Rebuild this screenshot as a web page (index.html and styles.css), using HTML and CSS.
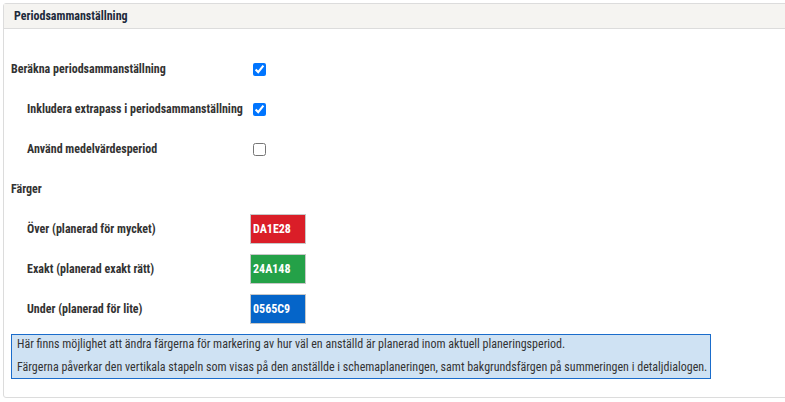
FILE: index.html
```html
<!DOCTYPE html>
<html lang="sv">

<head>
    <meta charset="UTF-8">
    <meta name="viewport"
        content="width=device-width, initial-scale=1.0">
    <title>Periodsammanställning</title>
    <link rel="stylesheet" href="styles.css">
</head>

<body>
    <section class="panel">
        <div class="panel-header">Periodsammanställning</div>
        <div class="panel-body">
            <div class="settings">
                <label class="setting-label" for="berakna">Beräkna periodsammanställning</label>
                <div class="setting-control"><input type="checkbox" id="berakna" checked></div>

                <label class="setting-label sub" for="extrapass">Inkludera extrapass i periodsammanställning</label>
                <div class="setting-control"><input type="checkbox" id="extrapass" checked></div>

                <label class="setting-label sub" for="medel">Använd medelvärdesperiod</label>
                <div class="setting-control"><input type="checkbox" id="medel"></div>

                <div class="setting-label">Färger</div>
                <div class="setting-control"></div>

                <label class="setting-label sub" for="over">Över (planerad för mycket)</label>
                <div class="setting-control"><input class="color-input over" id="over" value="DA1E28"></div>

                <label class="setting-label sub" for="exakt">Exakt (planerad exakt rätt)</label>
                <div class="setting-control"><input class="color-input exakt" id="exakt" value="24A148"></div>

                <label class="setting-label sub" for="under">Under (planerad för lite)</label>
                <div class="setting-control"><input class="color-input under" id="under" value="0565C9"></div>
            </div>
            <div class="info-box">
                <p>Här finns möjlighet att ändra färgerna för markering av hur väl en anställd är planerad inom aktuell planeringsperiod.</p>
                <p>Färgerna påverkar den vertikala stapeln som visas på den anställde i schemaplaneringen, samt bakgrundsfärgen på summeringen i detaljdialogen.</p>
            </div>
        </div>
    </section>
</body>

</html>
```

FILE: styles.css
```css
body {
    font-family: Roboto, "DejaVu Sans Condensed", sans-serif;
    font-stretch: 75%;
    font-size: 12px;
    color: #333;
    background-color: #fff;
    margin: 0;
    padding: 0;
    overflow: hidden;
}

.panel {
    margin: 3px -10px 0 3px;
    border: 1px solid #dcdcdc;
    border-radius: 3px;
    background-color: #fff;
}

.panel-header {
    background-color: #f5f4f1;
    border-bottom: 1px solid #dcdcdc;
    height: 24px;
    line-height: 24px;
    padding-left: 10px;
    font-weight: bold;
    color: #1d2a3b;
}

.panel-body {
    padding: 20px 7px 18px;
}

.settings {
    display: grid;
    grid-template-columns: 239px auto;
    grid-auto-rows: 40px;
    align-items: center;
}

.setting-label {
    font-weight: bold;
    color: #333;
    white-space: nowrap;
}

.setting-label.sub {
    padding-left: 16px;
}

.setting-control {
    display: flex;
    align-items: center;
}

.setting-control input[type="checkbox"] {
    margin: 0 0 0 3px;
    width: 13px;
    height: 13px;
}

.color-input {
    box-sizing: border-box;
    width: 56px;
    height: 30px;
    border: 1px solid #c8c8c8;
    padding: 0 0 0 2px;
    margin: 0;
    font-family: inherit;
    font-stretch: inherit;
    font-size: 12px;
    font-weight: bold;
    color: #fff;
    outline: none;
}

.color-input.over {
    background-color: #da1e28;
}

.color-input.exakt {
    background-color: #24a148;
}

.color-input.under {
    background-color: #0565c9;
}

.info-box {
    margin-top: 5px;
    width: 700px;
    box-sizing: border-box;
    background-color: #cfe2f3;
    border: 1px solid #1a6ccb;
    padding: 0 5px 2px;
    white-space: nowrap;
}

.info-box p {
    margin: 0;
    line-height: 18px;
}

.info-box p + p {
    margin-top: 5px;
}
```
